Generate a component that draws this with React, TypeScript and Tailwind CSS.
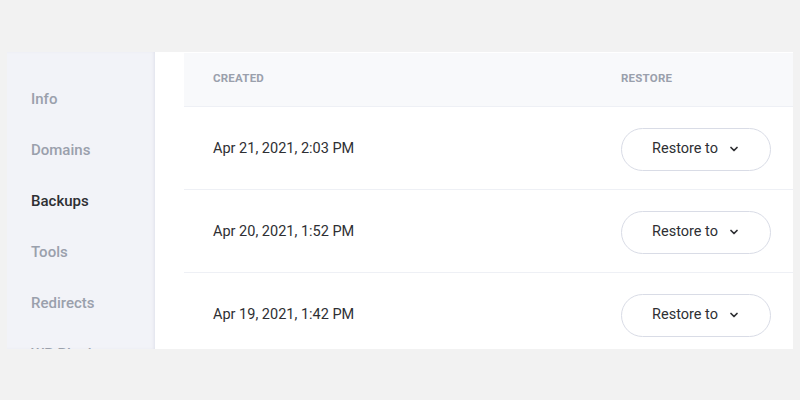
import { ChevronDown } from 'lucide-react'

// ─── Data ────────────────────────────────────────────────────

const NAV_ITEMS = ['Info', 'Domains', 'Backups', 'Tools', 'Redirects', 'WP Plugins']
const ACTIVE = 'Backups'

const BACKUPS = [
  { id: 1, created: 'Apr 21, 2021, 2:03 PM' },
  { id: 2, created: 'Apr 20, 2021, 1:52 PM' },
  { id: 3, created: 'Apr 19, 2021, 1:42 PM' },
]

// ─── Component ───────────────────────────────────────────────

export default function App() {
  return (
    <div
      className="w-[800px] h-[400px] bg-[#f2f2f2] pt-[52px] pl-[7px] overflow-hidden"
      style={{ fontFamily: 'Roboto, "Liberation Sans", sans-serif' }}
    >
      <div className="flex w-[786px] h-[297px] overflow-hidden">
        {/* Sidebar */}
        <nav className="w-[148px] shrink-0 bg-[#f2f3f8] shadow-[inset_-2px_0_3px_-1px_rgba(180,185,205,0.3)] pt-[37px] pl-[24px] flex flex-col gap-[30px]">
          {NAV_ITEMS.map((item) => (
            <div
              key={item}
              className={`text-[15px] leading-[21px] font-medium whitespace-nowrap ${
                item === ACTIVE ? 'text-[#2e2f33]' : 'text-[#9aa0ac]'
              }`}
            >
              {item}
            </div>
          ))}
        </nav>

        {/* Backups table */}
        <div className="flex-1 bg-white pl-[29px] pt-px">
          <div className="flex items-center h-[54px] bg-[#f8f9fb] border-b border-[#eef0f5] pb-[2px] text-[11.5px] font-bold tracking-[0.02em] text-[#9aa0ac] uppercase">
            <div className="flex-1 pl-[29px]">Created</div>
            <div className="w-[172px]">Restore</div>
          </div>
          {BACKUPS.map((b) => (
            <div
              key={b.id}
              className="flex items-center h-[83px] pt-[2px] border-b border-[#eef0f5]"
            >
              <div className="flex-1 pl-[29px] text-[14.5px] text-[#2e2f33]">{b.created}</div>
              <div className="w-[172px]">
                <button className="flex items-center justify-center gap-[10px] w-[150px] h-[43px] rounded-full border border-[#d9dce6] bg-white text-[14.5px] text-[#2e2f33]">
                  Restore to
                  <ChevronDown size={12} strokeWidth={3.5} />
                </button>
              </div>
            </div>
          ))}
        </div>
      </div>
    </div>
  )
}
